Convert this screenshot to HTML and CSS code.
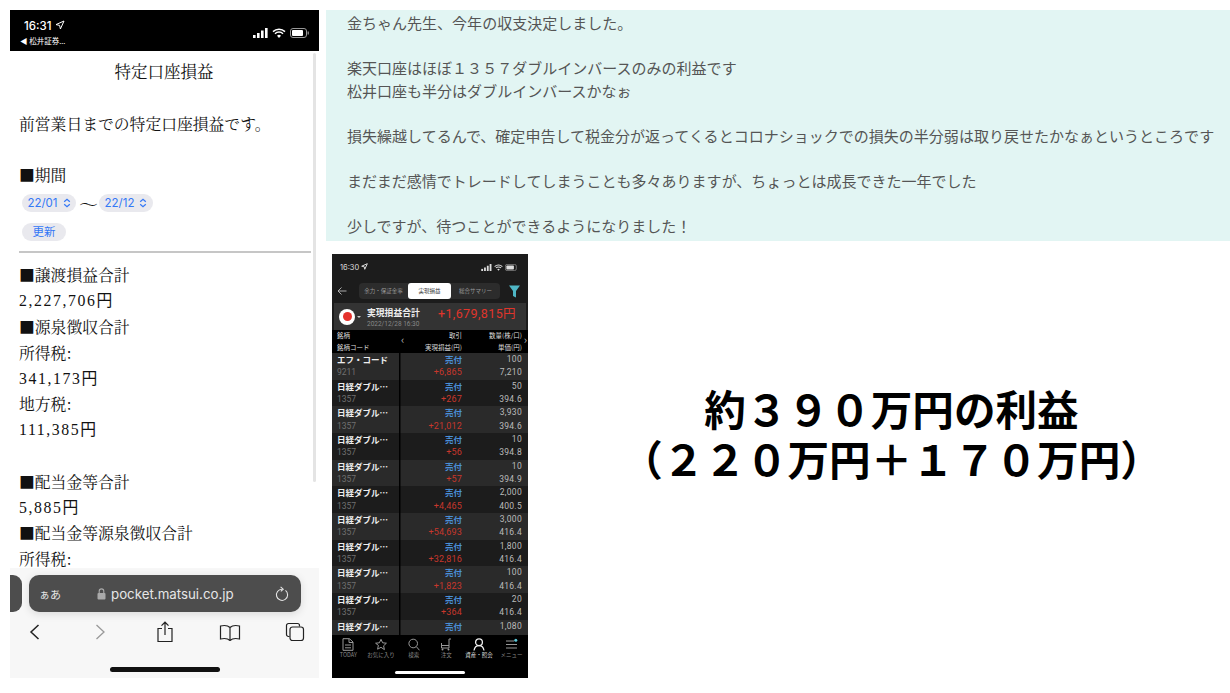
FILE: index.html
```html
<!DOCTYPE html>
<html lang="ja">
<head>
    <meta charset="UTF-8">
    <title>収支報告</title>
    <link rel="stylesheet" href="styles.css">
</head>
<body>
    <div class="page">
        <!-- left: safari screenshot -->
        <div class="safari">
            <div class="safari-status">
                <div class="status-left">
                    <div class="status-time">16:31
                        <svg width="10" height="10" viewBox="0 0 10 10"><path d="M9 1 1 4.6l3.6.8.8 3.6z" fill="none" stroke="#fff" stroke-width="1"/></svg>
                    </div>
                    <div class="status-back">◀ 松井証券...</div>
                </div>
                <div class="status-right">
                    <svg width="15" height="10" viewBox="0 0 15 10"><rect x="0" y="7" width="2.6" height="3" fill="#fff"/><rect x="4" y="5" width="2.6" height="5" fill="#fff"/><rect x="8" y="2.5" width="2.6" height="7.5" fill="#fff"/><rect x="12" y="0" width="2.6" height="10" fill="#fff"/></svg>
                    <svg width="14" height="10" viewBox="0 0 14 10"><path d="M1 3.6a8.6 8.6 0 0 1 12 0M3 5.8a5.6 5.6 0 0 1 8 0" fill="none" stroke="#fff" stroke-width="1.5"/><path d="M5 7.8a2.8 2.8 0 0 1 4 0L7 10z" fill="#fff"/></svg>
                    <svg width="19" height="10" viewBox="0 0 19 10"><rect x=".5" y=".5" width="16" height="9" rx="2.5" fill="none" stroke="#999"/><rect x="2" y="2" width="11" height="6" rx="1" fill="#fff"/><rect x="17.6" y="3.5" width="1.2" height="3" fill="#999"/></svg>
                </div>
            </div>
            <div class="safari-body">
                <div class="scrollbar"></div>
                <p class="doc-title">特定口座損益</p>
                <p class="doc-lead">前営業日までの特定口座損益です。</p>
                <p class="doc-line">■期間</p>
                <div class="period">
                    <span class="pill">22/01 <svg width="8" height="10" viewBox="0 0 8 10"><path d="M1.2 3.8 4 1.2l2.8 2.6M1.2 6.2 4 8.8l2.8-2.6" fill="none" stroke="#3478f6" stroke-width="1.2"/></svg></span>
                    <span class="tilde">〜</span>
                    <span class="pill">22/12 <svg width="8" height="10" viewBox="0 0 8 10"><path d="M1.2 3.8 4 1.2l2.8 2.6M1.2 6.2 4 8.8l2.8-2.6" fill="none" stroke="#3478f6" stroke-width="1.2"/></svg></span>
                </div>
                <span class="pill pill-update">更新</span>
                <hr class="doc-rule">
                <p class="doc-line">■譲渡損益合計</p>
                <p class="doc-line doc-num">2,227,706円</p>
                <p class="doc-line">■源泉徴収合計</p>
                <p class="doc-line">所得税:</p>
                <p class="doc-line doc-num">341,173円</p>
                <p class="doc-line">地方税:</p>
                <p class="doc-line doc-num">111,385円</p>
                <p class="doc-line">&nbsp;</p>
                <p class="doc-line">■配当金等合計</p>
                <p class="doc-line doc-num">5,885円</p>
                <p class="doc-line">■配当金等源泉徴収合計</p>
                <p class="doc-line doc-last">所得税:</p>
            </div>
            <div class="safari-bar">
                <div class="url-row">
                    <div class="url-stub"></div>
                    <div class="url-pill">
                        <span class="url-aa">ぁあ</span>
                        <span class="url-text">
                            <svg width="9" height="12" viewBox="0 0 9 12"><rect x=".5" y="5" width="8" height="6.5" rx="1" fill="#aaa"/><path d="M2.2 5V3.2a2.3 2.3 0 0 1 4.6 0V5" fill="none" stroke="#aaa" stroke-width="1.1"/></svg>
                            pocket.matsui.co.jp
                        </span>
                        <svg class="url-reload" width="14" height="16" viewBox="0 0 14 16"><path d="M10.5 4.4A5.6 5.6 0 1 1 7 3.2" fill="none" stroke="#e6e6e6" stroke-width="1.1"/><path d="M5.6.8 8.2 3.2 5.8 5.4" fill="none" stroke="#e6e6e6" stroke-width="1.1"/></svg>
                    </div>
                </div>
                <div class="safari-tools">
                    <svg width="12" height="18" viewBox="0 0 12 18"><path d="M9.5 2 2 9l7.5 7" fill="none" stroke="#222" stroke-width="1.5"/></svg>
                    <svg width="12" height="18" viewBox="0 0 12 18"><path d="M2.5 2 10 9l-7.5 7" fill="none" stroke="#999" stroke-width="1.3"/></svg>
                    <svg width="18" height="22" viewBox="0 0 18 22"><path d="M6 7.5H2v13h14v-13h-4M9 14V1.5M5.5 4.6 9 1.2l3.5 3.4" fill="none" stroke="#222" stroke-width="1.2"/></svg>
                    <svg width="22" height="17" viewBox="0 0 22 17"><path d="M11 3.5C9 1.6 5 1.2 1.5 2v13c3.5-.8 7.500-.4 9.500 1.500 2-1.900 6-2.300 9.500-1.500V2C17 1.200 13 1.600 11 3.500zM11 3.500v13" fill="none" stroke="#222" stroke-width="1.2"/></svg>
                    <svg width="20" height="20" viewBox="0 0 20 20"><path d="M4.500 14.500H3.500a2 2 0 0 1-2-2v-9a2 2 0 0 1 2-2h9a2 2 0 0 1 2 2v1" fill="none" stroke="#222" stroke-width="1.2"/><rect x="5" y="5" width="13.500" height="13.500" rx="2.500" fill="none" stroke="#222" stroke-width="1.2"/></svg>
                </div>
                <div class="safari-home"></div>
            </div>
        </div>

        <!-- right side -->
        <div class="main">
            <div class="note">
                <p>金ちゃん先生、今年の収支決定しました。</p>
                <p>楽天口座はほぼ１３５７ダブルインバースのみの利益です<br>松井口座も半分はダブルインバースかなぉ</p>
                <p>損失繰越してるんで、確定申告して税金分が返ってくるとコロナショックでの損失の半分弱は取り戻せたかなぁというところです</p>
                <p>まだまだ感情でトレードしてしまうことも多々ありますが、ちょっとは成長できた一年でした</p>
                <p>少しですが、待つことができるようになりました！</p>
            </div>
            <div class="lower">
                <div class="app">
                    <div class="app-status">
                        <span>16:30 <svg width="7" height="7" viewBox="0 0 10 10"><path d="M9 1 1 4.6l3.6.8.8 3.6z" fill="none" stroke="#ddd" stroke-width="1.4"/></svg></span>
                        <span class="app-status-icons">
                            <svg width="11" height="7" viewBox="0 0 15 10"><rect x="0" y="7" width="2.6" height="3" fill="#ddd"/><rect x="4" y="5" width="2.6" height="5" fill="#ddd"/><rect x="8" y="2.5" width="2.6" height="7.5" fill="#ddd"/><rect x="12" y="0" width="2.6" height="10" fill="#ddd"/></svg>
                            <svg width="9" height="7" viewBox="0 0 14 10"><path d="M1 3.6a8.6 8.6 0 0 1 12 0M3 5.8a5.6 5.6 0 0 1 8 0" fill="none" stroke="#ddd" stroke-width="1.6"/><path d="M5 7.8a2.8 2.8 0 0 1 4 0L7 10z" fill="#ddd"/></svg>
                            <svg width="13" height="7" viewBox="0 0 19 10"><rect x=".5" y=".5" width="16" height="9" rx="2.5" fill="none" stroke="#999"/><rect x="2" y="2" width="11" height="6" rx="1" fill="#ddd"/></svg>
                        </span>
                    </div>
                    <div class="app-tabs">
                        <svg width="10" height="10" viewBox="0 0 10 10"><path d="M9.5 5H1M4.500 1.500 1 5l3.500 3.500" fill="none" stroke="#bbb" stroke-width=".9"/></svg>
                        <div class="tab-group">
                            <span>余力・保証金率</span>
                            <span class="tab-on">実現損益</span>
                            <span>総合サマリー</span>
                        </div>
                        <svg width="11" height="13" viewBox="0 0 11 13"><path d="M0 .5h11L7 6v6.5L4 11V6z" fill="#4fb7c6"/></svg>
                    </div>
                    <div class="total">
                        <span class="total-flag"><i></i></span>
                        <span class="total-caret"></span>
                        <div class="total-text">
                            <div class="total-top"><b>実現損益合計</b><em>+1,679,815円</em></div>
                            <div class="total-date">2022/12/28 16:30</div>
                        </div>
                    </div>
                    <div class="thead">
                        <span>銘柄</span><span class="r">取引</span><span class="r">数量(株/口)</span>
                        <span>銘柄コード</span><span class="r">実現損益(円)</span><span class="r">単価(円)</span>
                        <i class="thead-l">‹</i><i class="thead-r">›</i>
                    </div>
                    <div class="rows">
                        <div class="row"><span class="name">エフ・コード</span><span class="side">売付</span><span class="qty">100</span><span class="code">9211</span><span class="pl">+6,865</span><span class="qty">7,210</span></div>
                        <div class="row"><span class="name">日経ダブル…</span><span class="side">売付</span><span class="qty">50</span><span class="code">1357</span><span class="pl">+267</span><span class="qty">394.6</span></div>
                        <div class="row"><span class="name">日経ダブル…</span><span class="side">売付</span><span class="qty">3,930</span><span class="code">1357</span><span class="pl">+21,012</span><span class="qty">394.6</span></div>
                        <div class="row"><span class="name">日経ダブル…</span><span class="side">売付</span><span class="qty">10</span><span class="code">1357</span><span class="pl">+56</span><span class="qty">394.8</span></div>
                        <div class="row"><span class="name">日経ダブル…</span><span class="side">売付</span><span class="qty">10</span><span class="code">1357</span><span class="pl">+57</span><span class="qty">394.9</span></div>
                        <div class="row"><span class="name">日経ダブル…</span><span class="side">売付</span><span class="qty">2,000</span><span class="code">1357</span><span class="pl">+4,465</span><span class="qty">400.5</span></div>
                        <div class="row"><span class="name">日経ダブル…</span><span class="side">売付</span><span class="qty">3,000</span><span class="code">1357</span><span class="pl">+54,693</span><span class="qty">416.4</span></div>
                        <div class="row"><span class="name">日経ダブル…</span><span class="side">売付</span><span class="qty">1,800</span><span class="code">1357</span><span class="pl">+32,816</span><span class="qty">416.4</span></div>
                        <div class="row"><span class="name">日経ダブル…</span><span class="side">売付</span><span class="qty">100</span><span class="code">1357</span><span class="pl">+1,823</span><span class="qty">416.4</span></div>
                        <div class="row"><span class="name">日経ダブル…</span><span class="side">売付</span><span class="qty">20</span><span class="code">1357</span><span class="pl">+364</span><span class="qty">416.4</span></div>
                        <div class="row row-cut"><span class="name">日経ダブル…</span><span class="side">売付</span><span class="qty">1,080</span></div>
                    </div>
                    <div class="app-nav">
                        <div class="nav-item">
                            <svg width="12" height="13" viewBox="0 0 12 13"><path d="M1 .7h6.5L11 4v8.3H1zM7 1v3.5h4M3 7h6M3 9.8h6" fill="none" stroke="#999" stroke-width="1"/></svg>
                            <span>TODAY</span>
                        </div>
                        <div class="nav-item">
                            <svg width="12" height="13" viewBox="0 0 12 12"><path d="m6 .8 1.6 3.5 3.8.4-2.8 2.6.8 3.8L6 8.800l-3.400 1.900.8-3.800L.6 4.700l3.800-.4z" fill="none" stroke="#999" stroke-width="1"/></svg>
                            <span>お気に入り</span>
                        </div>
                        <div class="nav-item">
                            <svg width="12" height="13" viewBox="0 0 12 13"><circle cx="5.2" cy="5.5" r="4.3" fill="none" stroke="#999"/><path d="m8.3 8.6 3.2 3.7" stroke="#999"/></svg>
                            <span>検索</span>
                        </div>
                        <div class="nav-item">
                            <svg width="12" height="13" viewBox="0 0 12 13"><path d="M11 1H9v9H1.5V5M1.5 7.5H9" fill="none" stroke="#999"/><circle cx="2.5" cy="11.5" r="1" fill="#999"/><circle cx="8.5" cy="11.5" r="1" fill="#999"/></svg>
                            <span>注文</span>
                        </div>
                        <div class="nav-item nav-on">
                            <svg width="12" height="13" viewBox="0 0 12 13"><circle cx="6" cy="4.2" r="3.4" fill="none" stroke="#eee" stroke-width="1.3"/><path d="M1 12.5c.5-2.8 2.300-4.800 5-4.800s4.500 2 5 4.800" fill="none" stroke="#eee" stroke-width="1.3"/></svg>
                            <span>資産・照会</span>
                        </div>
                        <div class="nav-item">
                            <svg width="13" height="13" viewBox="0 0 13 13"><path d="M1 3h8M1 6.5h11M1 10h11" stroke="#999"/><circle cx="10.8" cy="2.2" r="1.5" fill="#5cc6d6"/></svg>
                            <span>メニュー</span>
                        </div>
                    </div>
                    <div class="app-home"></div>
                </div>
                <div class="caption">約３９０万円の利益<br>（２２０万円＋１７０万円）</div>
            </div>
        </div>
    </div>
</body>
</html>
```

FILE: styles.css
```css
* {
    box-sizing: border-box;
}
body {
    margin: 0;
    background: #fff;
    font-family: "Noto Sans CJK JP", sans-serif;
    overflow: hidden;
}
p {
    margin: 0;
}
.page {
    display: flex;
    height: 693px;
    padding: 10px 0 15px 10px;
    gap: 7px;
}

/* safari screenshot */
.safari {
    width: 309px;
    display: flex;
    flex-direction: column;
    flex-shrink: 0;
}
.safari-status {
    height: 41px;
    background: #000;
    color: #fff;
    display: flex;
    justify-content: space-between;
    padding: 0 10px 0 14px;
    flex-shrink: 0;
}
.status-time {
    font-family: "Inter", sans-serif;
    font-size: 11.5px;
    font-weight: 500;
    line-height: 14px;
    margin-top: 9px;
}
.status-back {
    font-size: 7.5px;
    line-height: 10px;
    margin-top: 3px;
    margin-left: -4px;
}
.status-right {
    display: flex;
    align-items: center;
    gap: 4px;
    margin-top: 5px;
}
.safari-body {
    flex: 1;
    position: relative;
    overflow: hidden;
    padding: 8px 9px 0;
    font-family: "Noto Serif CJK JP", "Noto Sans CJK JP", serif;
    font-size: 15.8px;
    line-height: 25.8px;
    color: #111;
}
.scrollbar {
    position: absolute;
    top: 2px;
    right: 3px;
    width: 3px;
    height: 429px;
    background: #e4e4e4;
    border-radius: 2px;
}
.doc-title {
    text-align: center;
    font-size: 16.5px;
    margin-left: -1px;
    margin-bottom: 26px;
}
.doc-lead {
    margin-bottom: 25px;
}
.doc-num {
    font-family: "Liberation Serif", "Noto Sans CJK JP", serif;
    letter-spacing: 1.6px;
}
.doc-last {
    line-height: 18px;
    margin-top: 4px;
}
.period {
    display: flex;
    align-items: center;
    gap: 3px;
    height: 18px;
    margin: 7px 0 11px 3px;
}
.pill {
    display: inline-flex;
    align-items: center;
    justify-content: center;
    gap: 5px;
    width: 54px;
    height: 18px;
    border-radius: 9px;
    background: #e9e9ee;
    color: #3478f6;
    font-family: "Inter", "Noto Sans CJK JP", sans-serif;
    font-size: 11.5px;
    line-height: 18px;
}
.tilde {
    font-size: 19px;
    width: 17px;
    text-align: center;
}
.pill-update {
    width: 44px;
    margin-left: 3px;
    display: flex;
}
.doc-rule {
    border: 0;
    height: 2px;
    background: #c6c6c6;
    margin: 10px 0 9px;
    width: 292px;
}
.safari-bar {
    height: 110px;
    background: #f7f7f7;
    flex-shrink: 0;
    display: flex;
    flex-direction: column;
}
.url-row {
    display: flex;
    gap: 7px;
    height: 37px;
    margin-top: 7px;
}
.url-stub {
    width: 12px;
    background: #4d4d4d;
    border-radius: 0 9px 9px 0;
}
.url-pill {
    width: 272px;
    background: #4d4d4d;
    border-radius: 10px;
    display: flex;
    align-items: center;
    color: #e6e6e6;
    padding: 0 10px;
    box-shadow: 0 2px 8px rgba(0,0,0,0.12);
}
.url-aa {
    font-size: 11px;
    width: 59px;
}
.url-text {
    font-family: "Inter", sans-serif;
    font-size: 13.3px;
    width: 185px;
    display: flex;
    align-items: center;
    gap: 5px;
    margin-left: -1px;
}
.url-reload {
    flex-shrink: 0;
    margin-left: -7px;
}
.safari-tools {
    display: grid;
    grid-template-columns: repeat(5, 65px);
    justify-content: center;
    justify-items: center;
    align-items: center;
    height: 28px;
    margin-top: 6px;
}
.safari-home {
    width: 110px;
    height: 5px;
    border-radius: 3px;
    background: #111;
    margin: 21px auto 0;
}

/* right side */
.main {
    flex: 1;
    display: flex;
    flex-direction: column;
    min-width: 0;
}
.note {
    height: 231px;
    background: #e2f5f3;
    padding: 2px 0 0 21px;
    color: #555;
    font-size: 15.03px;
    line-height: 22.5px;
    white-space: nowrap;
    overflow: hidden;
}
.note p {
    margin-bottom: 22.5px;
}
.lower {
    display: flex;
    flex: 1;
    padding: 13px 0 0 6px;
}

/* trading app */
.app {
    width: 196px;
    height: 424px;
    background: #1c1c1c;
    color: #ddd;
    display: flex;
    flex-direction: column;
    overflow: hidden;
    flex-shrink: 0;
    position: relative;
}
.app-status {
    display: flex;
    justify-content: space-between;
    align-items: center;
    height: 27px;
    padding: 0 10px 0 8px;
    font-family: "Inter", sans-serif;
    font-size: 7.5px;
}
.app-status-icons {
    display: flex;
    gap: 2px;
}
.app-tabs {
    display: flex;
    align-items: center;
    gap: 12px;
    height: 20px;
    padding: 0 8px 0 5px;
}
.tab-group {
    display: flex;
    align-items: center;
    width: 141px;
    height: 16px;
    background: #2c2c2c;
    border-radius: 4px;
    margin-right: -3px;
    font-size: 5.5px;
    color: #999;
    white-space: nowrap;
}
.tab-group span {
    flex: 1;
    text-align: center;
}
.tab-group .tab-on {
    background: #fff;
    color: #333;
    height: 16px;
    line-height: 16px;
    border-radius: 3px;
    flex: 0 0 43px;
}
.total {
    height: 27px;
    margin: 2px 2px 0;
    background: #333;
    display: flex;
    align-items: center;
    padding-left: 5px;
}
.total-flag {
    width: 16px;
    height: 16px;
    border-radius: 50%;
    background: #fff;
    display: flex;
    align-items: center;
    justify-content: center;
}
.total-flag i {
    width: 9px;
    height: 9px;
    border-radius: 50%;
    background: #e5322d;
}
.total-caret {
    width: 0;
    height: 0;
    border: 2px solid transparent;
    border-top-color: #ccc;
    margin: 3px 6px 0 2px;
}
.total-text {
    flex: 1;
}
.total-top {
    display: flex;
    justify-content: space-between;
    align-items: center;
    padding-right: 10px;
    height: 15px;
}
.total-top b {
    font-size: 8.8px;
    font-weight: 700;
    color: #eee;
}
.total-top em {
    font-style: normal;
    font-family: "Roboto", "Noto Sans CJK JP", sans-serif;
    font-weight: 400;
    font-size: 12.5px;
    letter-spacing: .4px;
    color: #e0352b;
}
.total-date {
    font-family: "Roboto", sans-serif;
    font-size: 6.5px;
    line-height: 9px;
    color: #888;
}
.thead {
    display: grid;
    grid-template-columns: 67px 58px 60px;
    grid-auto-rows: 11.5px;
    align-content: center;
    height: 23px;
    background: #000;
    padding-left: 5px;
    font-size: 6.5px;
    line-height: 11.5px;
    color: #ddd;
    position: relative;
}
.thead .r {
    text-align: right;
}
.thead-l, .thead-r {
    position: absolute;
    top: 4px;
    font-style: normal;
    font-size: 11px;
    color: #bbb;
}
.thead-l { left: 69px; }
.thead-r { right: 1px; }
.rows {
    flex: 1;
    overflow: hidden;
    background: #000;
}
.row {
    display: grid;
    grid-template-columns: 67px 58px 60px;
    grid-auto-rows: 13.33px;
    height: 26.67px;
    background: #1c1c1c;
    padding-left: 5px;
    line-height: 13.33px;
    white-space: nowrap;
    background-image: linear-gradient(#000, #000);
    background-size: 1.5px 100%;
    background-position: 67px 0;
    background-repeat: no-repeat;
}
.row:nth-child(odd) {
    background-color: #2a2a2a;
}
.row-cut {
    height: 15px;
}
.name {
    font-size: 8.5px;
    font-weight: 700;
    color: #eee;
    overflow: hidden;
}
.code {
    font-family: "Roboto", sans-serif;
    font-size: 8.5px;
    color: #707070;
}
.side {
    font-size: 8.5px;
    font-weight: 700;
    color: #4a90d9;
    text-align: right;
}
.pl {
    font-family: "Roboto", sans-serif;
    font-size: 9px;
    letter-spacing: .2px;
    color: #c8372c;
    text-align: right;
}
.qty {
    font-family: "Roboto", sans-serif;
    font-size: 8.5px;
    letter-spacing: .3px;
    color: #bbb;
    text-align: right;
}
.app-nav {
    display: flex;
    height: 43px;
    background: #000;
    padding-top: 3px;
    flex-shrink: 0;
    justify-content: space-around;
}
.nav-item {
    width: 32.6px;
    display: flex;
    flex-direction: column;
    align-items: center;
    font-size: 5.5px;
    line-height: 8px;
    color: #888;
    white-space: nowrap;
}
.nav-on {
    color: #ddd;
}
.app-home {
    position: absolute;
    left: 63px;
    bottom: 4px;
    width: 70px;
    height: 3px;
    background: #fff;
    border-radius: 2px;
}
.caption {
    flex: 1;
    text-align: center;
    font-size: 41.6px;
    font-weight: 700;
    line-height: 50px;
    color: #000;
    padding: 129px 0 0 25px;
    white-space: nowrap;
}
```
